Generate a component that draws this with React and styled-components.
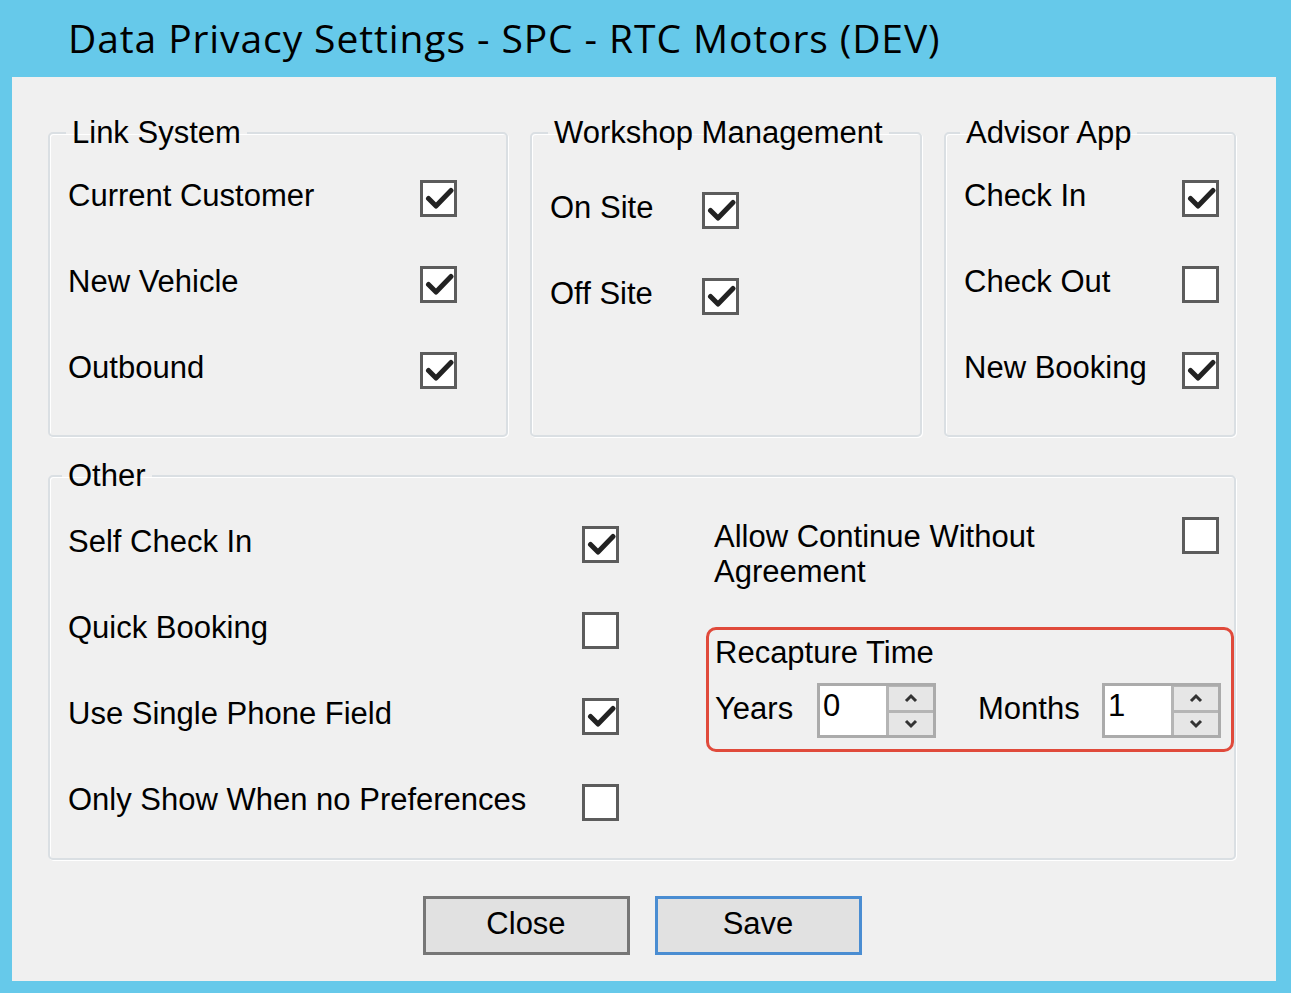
import React from "react";
import styled, { createGlobalStyle } from "styled-components";

const GlobalStyle = createGlobalStyle`
  html, body { margin: 0; padding: 0; }
  body {
    background: #66c9ea;
    font-family: "Liberation Sans", Arial, sans-serif;
    color: #000;
  }
  * { box-sizing: border-box; }
`;

const Window = styled.div`
  width: 1291px;
  height: 993px;
  background: #66c9ea;
  display: flex;
  flex-direction: column;
  padding: 0 15px 12px 12px;
`;

const TitleBar = styled.div`
  height: 77px;
  flex: none;
  display: flex;
  align-items: center;
  padding-left: 56px;
  padding-bottom: 2px;
  font-family: "Open Sans", "Noto Sans", sans-serif;
  font-size: 39px;
  letter-spacing: 0.9px;
  color: #000;
`;

const Client = styled.div`
  flex: 1;
  background: #f0f0f0;
  padding: 38px 40px 0 36px;
  display: flex;
  flex-direction: column;
`;

const TopRow = styled.div`
  display: grid;
  grid-template-columns: 460px 392px 292px;
  column-gap: 22px;
`;

const Group = styled.fieldset`
  margin: 0;
  min-width: 0;
  height: ${(p) => p.$height}px;
  padding: ${(p) => p.$padTop || 0}px 0 0 18px;
  border: 2px solid #dadfe3;
  border-radius: 5px;
  box-shadow: inset 1px 1px 0 #ffffff, 1px 1px 0 #ffffff;
`;

const Legend = styled.legend`
  font-size: 31px;
  line-height: 36px;
  padding: 0 6px;
  margin-left: ${(p) => p.$offset || 0}px;
  color: #000;
`;

const Rows = styled.div`
  display: grid;
  grid-template-columns: ${(p) => p.$labelWidth}px 37px;
  grid-auto-rows: 86px;
  align-items: center;
`;

const Label = styled.span`
  font-size: 31px;
  line-height: 36px;
  white-space: nowrap;
  margin-top: -4px;
`;

const Box = styled.span`
  width: 37px;
  height: 37px;
  border: 3px solid #5c5c5c;
  background: #ffffff;
  display: block;
`;

const CheckSvg = styled.svg`
  display: block;
  width: 31px;
  height: 31px;
`;

function CheckBox({ checked }) {
  return (
    <Box>
      {checked && (
        <CheckSvg viewBox="0 0 31 31">
          <polyline
            points="5.5,15.5 13,23 28,7.5"
            fill="none"
            stroke="#222"
            strokeWidth="5"
            strokeLinecap="round"
            strokeLinejoin="round"
          />
        </CheckSvg>
      )}
    </Box>
  );
}

const OtherGroup = styled(Group)`
  margin-top: 21px;
`;

const OtherBody = styled.div`
  display: flex;
  padding-top: 7px;
`;

const RightCol = styled.div`
  margin-left: 87px;
  width: 528px;
  display: flex;
  flex-direction: column;
  padding-top: 16px;
`;

const AllowRow = styled.div`
  display: grid;
  grid-template-columns: 468px 37px;
  padding-left: 8px;
  align-items: start;
`;

const WrapLabel = styled.span`
  font-size: 31px;
  line-height: 35px;
  margin-top: 2px;
`;

const RecaptureBox = styled.div`
  margin-top: 38px;
  height: 125px;
  border: 3px solid #e04a3b;
  border-radius: 10px;
  padding: 5px 0 0 6px;
  display: flex;
  flex-direction: column;
`;

const RecaptureTitle = styled.div`
  font-size: 31px;
  line-height: 36px;
`;

const SpinRow = styled.div`
  display: flex;
  align-items: center;
  margin-top: 12px;
`;

const SpinLabel = styled.span`
  font-size: 31px;
  line-height: 36px;
  width: ${(p) => p.$width}px;
  padding-left: ${(p) => p.$indent || 0}px;
  flex: none;
  margin-top: -3px;
`;

const Spinner = styled.div`
  width: 119px;
  height: 55px;
  border: 3px solid #ababab;
  background: #ffffff;
  display: flex;
  flex: none;
`;

const SpinValue = styled.div`
  flex: 1;
  font-size: 31px;
  line-height: 40px;
  padding-left: 3px;
`;

const SpinButtons = styled.div`
  width: 47px;
  display: grid;
  grid-template-rows: 1fr 1fr;
  row-gap: 3px;
  background: #b5b5b5;
  padding: 1px 0 0 3px;
`;

const SpinBtn = styled.div`
  background: #e6e6e6;
  display: flex;
  align-items: center;
  justify-content: center;
`;

const Chevron = styled.svg`
  width: 16px;
  height: 12px;
  display: block;
`;

function NumberSpinner({ value }) {
  return (
    <Spinner>
      <SpinValue>{value}</SpinValue>
      <SpinButtons>
        <SpinBtn>
          <Chevron viewBox="0 0 16 12">
            <polyline points="3,9 8,4 13,9" fill="none" stroke="#333" strokeWidth="3" />
          </Chevron>
        </SpinBtn>
        <SpinBtn>
          <Chevron viewBox="0 0 16 12">
            <polyline points="3,3 8,8 13,3" fill="none" stroke="#333" strokeWidth="3" />
          </Chevron>
        </SpinBtn>
      </SpinButtons>
    </Spinner>
  );
}

const ButtonRow = styled.div`
  margin-top: 36px;
  display: flex;
  justify-content: center;
  gap: 25px;
`;

const DialogButton = styled.button`
  width: 207px;
  height: 59px;
  background: #e1e1e1;
  border: ${(p) => (p.$default ? "3px solid #4a8dd2" : "3px solid #767676")};
  font-family: "Liberation Sans", Arial, sans-serif;
  font-size: 31px;
  color: #000;
  padding: 0 0 4px;
  margin: 0;
`;

const linkSystem = [
  ["Current Customer", true],
  ["New Vehicle", true],
  ["Outbound", true],
];
const workshop = [
  ["On Site", true],
  ["Off Site", true],
];
const advisor = [
  ["Check In", true],
  ["Check Out", false],
  ["New Booking", true],
];
const other = [
  ["Self Check In", true],
  ["Quick Booking", false],
  ["Use Single Phone Field", true],
  ["Only Show When no Preferences", false],
];

function CheckRows({ items, labelWidth }) {
  return (
    <Rows $labelWidth={labelWidth}>
      {items.map(([label, checked]) => (
        <React.Fragment key={label}>
          <Label>{label}</Label>
          <CheckBox checked={checked} />
        </React.Fragment>
      ))}
    </Rows>
  );
}

export default function App() {
  return (
    <>
      <GlobalStyle />
      <Window>
        <TitleBar>Data Privacy Settings - SPC - RTC Motors (DEV)</TitleBar>
        <Client>
          <TopRow>
            <Group $height={322} $padTop={4}>
              <Legend $offset={-2}>Link System</Legend>
              <CheckRows items={linkSystem} labelWidth={352} />
            </Group>
            <Group $height={322} $padTop={16}>
              <Legend $offset={-2}>Workshop Management</Legend>
              <CheckRows items={workshop} labelWidth={152} />
            </Group>
            <Group $height={322} $padTop={4}>
              <Legend $offset={-4}>Advisor App</Legend>
              <CheckRows items={advisor} labelWidth={218} />
            </Group>
          </TopRow>
          <OtherGroup $height={402}>
            <Legend $offset={-6}>Other</Legend>
            <OtherBody>
              <CheckRows items={other} labelWidth={514} />
              <RightCol>
                <AllowRow>
                  <WrapLabel>
                    Allow Continue Without
                    <br />
                    Agreement
                  </WrapLabel>
                  <CheckBox checked={false} />
                </AllowRow>
                <RecaptureBox>
                  <RecaptureTitle>Recapture Time</RecaptureTitle>
                  <SpinRow>
                    <SpinLabel $width={102}>Years</SpinLabel>
                    <NumberSpinner value="0" />
                    <SpinLabel $width={166} $indent={42}>
                      Months
                    </SpinLabel>
                    <NumberSpinner value="1" />
                  </SpinRow>
                </RecaptureBox>
              </RightCol>
            </OtherBody>
          </OtherGroup>
          <ButtonRow>
            <DialogButton>Close</DialogButton>
            <DialogButton $default>Save</DialogButton>
          </ButtonRow>
        </Client>
      </Window>
    </>
  );
}
